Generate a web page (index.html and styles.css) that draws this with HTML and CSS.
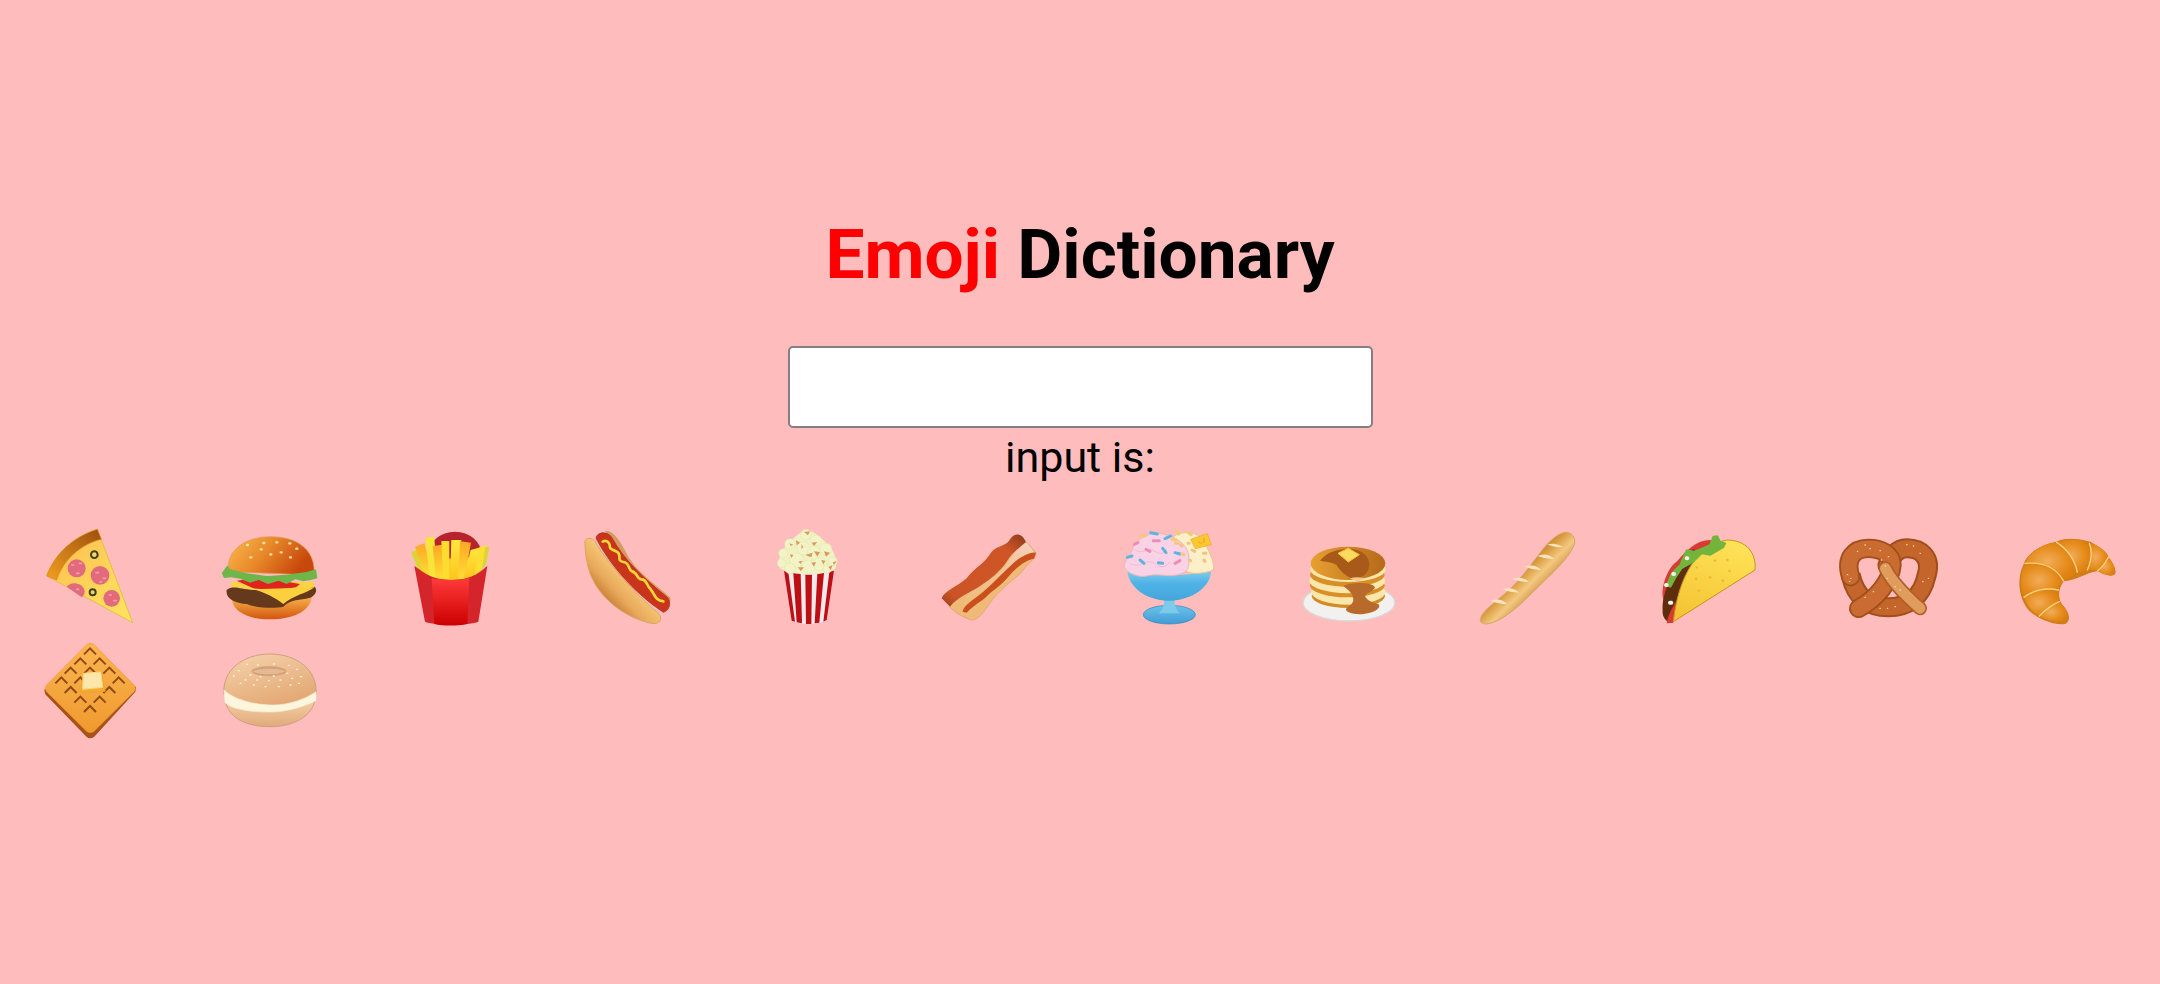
FILE: index.html
```html
<!DOCTYPE html>
<html lang="en">
<head>
<meta charset="utf-8">
<title>Emoji Dictionary</title>
<link rel="stylesheet" href="styles.css">
</head>
<body>
<main class="app">
  <h1 class="title"><span class="title-accent">Emoji</span> Dictionary</h1>
  <input class="search" type="text" aria-label="Search">
  <p class="output">input is:</p>
  <div class="emoji-grid">

    <!-- pizza -->
    <svg class="emoji" viewBox="66 54 288 288" role="img" aria-label="pizza">
      <defs>
        <linearGradient id="pz1" x1="0" y1="1" x2="1" y2="0"><stop offset="0" stop-color="#f2a020"/><stop offset="1" stop-color="#9c4e0d"/></linearGradient>
        <linearGradient id="pz2" x1="0" y1="0" x2="1" y2="1"><stop offset="0" stop-color="#ffb84e"/><stop offset="0.6" stop-color="#fed65a"/><stop offset="1" stop-color="#fee45f"/></linearGradient>
      </defs>
      <path d="M80 198C104 132 160 80 232 58L338 338Z" fill="url(#pz2)" stroke="#e0c14d" stroke-width="3" stroke-linejoin="round"/>
      <path d="M80 198C104 132 160 80 232 58L244 88C182 102 130 150 110 210Z" fill="url(#pz1)" stroke="#d9881e" stroke-width="2" stroke-linejoin="round"/>
      <circle cx="170" cy="175" r="27" fill="#e36a7d"/>
      <circle cx="240" cy="196" r="28" fill="#e36a7d"/>
      <path d="M140 230C150 215 185 215 193 240C196 250 190 258 185 262Z" fill="#e36a7d"/>
      <circle cx="275" cy="265" r="25" fill="#e36a7d"/>
      <path d="M155 165h6M178 160h6M170 190h7M228 188h7M250 205h7M240 216h5M268 255h6M282 272h6M170 238h6" stroke="#f2a0a8" stroke-width="5" stroke-linecap="round"/>
      <circle cx="223" cy="134" r="10" fill="#fbd56a" stroke="#3c4319" stroke-width="6"/>
      <circle cx="218" cy="247" r="9" fill="#fbd56a" stroke="#3c4319" stroke-width="6"/>
    </svg>

    <!-- burger -->
    <svg class="emoji" viewBox="606 54 288 288" role="img" aria-label="hamburger">
      <defs>
        <linearGradient id="bg1" x1="0" y1="0" x2="1" y2="0.35"><stop offset="0" stop-color="#fdbb4e"/><stop offset="0.5" stop-color="#e8892a"/><stop offset="1" stop-color="#c8470c"/></linearGradient>
        <linearGradient id="bg2" x1="0" y1="0" x2="0" y2="1"><stop offset="0" stop-color="#f8b14a"/><stop offset="1" stop-color="#d2550e"/></linearGradient>
      </defs>
      <path d="M636 270C640 305 685 328 750 328C820 328 868 305 876 262Z" fill="url(#bg2)"/>
      <path d="M625 185C618 118 680 80 752 80C830 80 888 118 882 195Z" fill="url(#bg1)" stroke="#d99a55" stroke-width="2"/>
      <path d="M630 215H882V240L640 240Z" fill="#f8d34a"/>
      <path d="M650 212L680 208 770 210 840 222 828 232 770 240 700 235Z" fill="#e0231c"/>
      <path d="M605 190L622 166 630 178 680 190 740 198 800 194 860 186 888 178 892 205 872 210 850 214 826 208 800 222 776 212 744 222 716 210 690 218 660 206 634 202 612 204Z" fill="#6fb64a"/>
      <path d="M620 240C640 225 660 238 700 240C770 245 840 245 884 230C894 240 886 258 868 264C840 272 815 265 790 290C770 295 710 295 680 282C650 280 615 268 620 240Z" fill="#64391c"/>
      <path d="M700 238L884 232C860 250 820 256 790 282C770 265 730 245 700 238Z" fill="#fbcf3d"/>
      <path d="M681 105h3M730 99h3M769 97h3M808 100h3M829 116h3M722 118h3M782 127h3M751 133h3M691 142h3M810 142h3" stroke="#fbe0a0" stroke-width="7" stroke-linecap="round"/>
    </svg>

    <!-- fries -->
    <svg class="emoji" viewBox="66 54 288 288" role="img" aria-label="french fries">
      <defs>
        <linearGradient id="fr1" x1="0" y1="0" x2="0" y2="1"><stop offset="0" stop-color="#ff3b3b"/><stop offset="1" stop-color="#cc0000"/></linearGradient>
        <linearGradient id="fr2" x1="0" y1="0" x2="0" y2="1"><stop offset="0" stop-color="#ffa726"/><stop offset="1" stop-color="#ffe234"/></linearGradient>
        <linearGradient id="fr3" x1="0" y1="0" x2="0" y2="1"><stop offset="0" stop-color="#ffe93b"/><stop offset="1" stop-color="#ffc21f"/></linearGradient>
      </defs>
      <ellipse cx="225" cy="135" rx="80" ry="70" fill="#b6232d"/>
      <path d="M120 150L310 140 300 200 150 212Z" fill="#ffc928"/>
      <path d="M94 126L112 120 130 190 118 190Z" fill="#d9d632"/>
      <path d="M105 110L133 100 165 210 130 195Z" fill="url(#fr2)"/>
      <path d="M136 85L162 78 175 215 150 210Z" fill="#f8e53a"/>
      <path d="M158 108L188 104 198 215 168 212Z" fill="url(#fr2)"/>
      <path d="M184 93H208V215H190Z" fill="#ffdc2e"/>
      <path d="M214 90H244L238 215H210Z" fill="url(#fr3)"/>
      <path d="M240 94L273 98 252 212 234 215Z" fill="url(#fr2)"/>
      <path d="M272 120L302 112 288 195 248 212Z" fill="url(#fr3)"/>
      <path d="M298 112L318 106 308 175 284 195Z" fill="#ffde33"/>
      <path d="M316 112L328 110 318 165 306 175Z" fill="#d8d636"/>
      <path d="M103 168C130 185 150 209 215 210C275 209 295 190 322 168L295 335C270 347 160 347 135 335Z" fill="#d4252c"/>
      <path d="M155 205C175 209 195 210 215 210C235 210 255 208 268 204L262 342C230 348 190 348 163 342Z" fill="url(#fr1)"/>
    </svg>

    <!-- hot dog -->
    <svg class="emoji" viewBox="606 54 288 288" role="img" aria-label="hot dog">
      <defs>
        <linearGradient id="hd1" gradientUnits="userSpaceOnUse" x1="660" y1="260" x2="735" y2="190"><stop offset="0" stop-color="#c67a33"/><stop offset="0.45" stop-color="#e8a95a"/><stop offset="1" stop-color="#f6c878"/></linearGradient>
      </defs>
      <path d="M675 62C700 60 720 90 745 140C775 190 830 225 870 262C876 275 868 280 860 280L700 100Z" fill="#d69a5f"/>
      <path d="M648 85C650 65 682 62 695 82C730 146 790 205 862 262C876 280 868 302 850 307C770 255 692 170 648 85Z" fill="#c8351a" stroke="#a62812" stroke-width="2"/>
      <path d="M668 95C682 88 690 100 690 112C690 122 708 118 716 130C722 144 712 152 730 156C750 158 742 176 756 184C774 188 768 206 784 208C802 208 798 226 812 238C826 256 826 272 850 274" fill="none" stroke="#fbd738" stroke-width="8" stroke-linecap="round" stroke-linejoin="round"/>
      <path d="M615 100C612 85 632 78 645 95C690 170 770 255 835 310C850 325 840 345 815 340C740 325 660 270 630 190C620 160 615 130 615 100Z" fill="url(#hd1)" stroke="#d9a565" stroke-width="3"/>
    </svg>

    <!-- popcorn -->
    <svg class="emoji" viewBox="66 54 288 288" role="img" aria-label="popcorn">
      <path d="M132 182C170 195 240 195 282 182L258 332C230 345 180 345 155 332Z" fill="#f2e9ec"/>
      <path d="M132 183L145 187 165 335 155 332ZM160 190L182 192 186 340 170 337ZM196 194H216L214 342 198 342ZM232 192L252 188 238 338 224 340ZM268 186L282 182 260 330 250 335Z" fill="#bd0f14"/>
      <path d="M115 160C118 120 150 90 190 62C215 55 240 80 265 105C285 125 295 160 285 178C250 198 160 198 120 175Z" fill="#f1f2c4"/>
      <g fill="#f2f3c6" stroke="#e3e3a6" stroke-width="1.5">
        <circle cx="125" cy="160" r="13"/><circle cx="130" cy="130" r="14"/><circle cx="150" cy="102" r="16"/>
        <circle cx="198" cy="74" r="16"/><circle cx="170" cy="150" r="22"/><circle cx="190" cy="115" r="20"/>
        <circle cx="228" cy="92" r="17"/><circle cx="222" cy="128" r="20"/><circle cx="205" cy="170" r="20"/>
        <circle cx="258" cy="118" r="18"/><circle cx="278" cy="155" r="14"/><circle cx="240" cy="162" r="20"/>
        <circle cx="150" cy="175" r="16"/><circle cx="262" cy="176" r="13"/>
      </g>
      <path d="M192 66L210 64 204 76ZM148 100L160 104 152 108ZM168 90L180 98 170 106ZM185 102L190 112 184 116ZM215 98L232 96 222 108ZM150 132L160 136 154 144ZM175 155L188 152 182 162ZM174 172L192 172 182 184ZM214 158L228 156 222 170ZM196 135L218 128 214 142ZM222 124L240 126 232 140ZM252 124L270 128 258 140ZM244 150L256 152 250 164ZM265 170L278 166 272 180ZM278 156L290 154 282 166Z" fill="#d99a5c"/>
    </svg>

    <!-- bacon -->
    <svg class="emoji" viewBox="606 54 288 288" role="img" aria-label="bacon">
      <defs>
        <linearGradient id="bc1" x1="0" y1="1" x2="1" y2="0"><stop offset="0" stop-color="#9c3e20"/><stop offset="0.15" stop-color="#cb5426"/><stop offset="0.78" stop-color="#cf5526"/><stop offset="1" stop-color="#8a3a1e"/></linearGradient>
        <linearGradient id="bc2" x1="0" y1="1" x2="1" y2="0"><stop offset="0" stop-color="#f0bb7a"/><stop offset="0.55" stop-color="#f2c394"/><stop offset="1" stop-color="#f6d2c2"/></linearGradient>
      </defs>
      <path d="M628 290C640 265 665 250 690 230L860 96L888 128C890 145 865 158 848 182C832 205 805 215 785 240C765 255 750 280 735 300C722 318 708 332 692 330C670 322 645 308 628 290Z" fill="#efb978" stroke="#d9a06a" stroke-width="2"/>
      <path d="M858 96C840 110 830 118 815 140C800 160 790 175 770 195C745 215 715 232 680 258L668 290C690 265 735 240 760 222C790 200 815 160 886 130Z" fill="url(#bc2)"/>
      <path d="M605 265C615 240 650 232 680 205C700 175 730 165 755 125C775 105 800 110 812 85C825 68 845 68 858 96C840 112 815 128 800 155C780 185 750 208 720 228C690 248 652 262 630 290Z" fill="url(#bc1)"/>
      <path d="M668 305C670 285 700 270 730 245C765 215 795 180 828 152C850 138 870 125 888 128L882 146C855 150 830 172 805 200C780 230 755 242 735 264C712 282 695 292 680 308Z" fill="#c9501c"/>
    </svg>

    <!-- ice cream -->
    <svg class="emoji" viewBox="66 54 288 288" role="img" aria-label="ice cream">
      <defs>
        <linearGradient id="ic1" x1="0" y1="0" x2="0" y2="1"><stop offset="0" stop-color="#7ecbec"/><stop offset="0.4" stop-color="#4fb3e6"/><stop offset="1" stop-color="#45a5db"/></linearGradient>
        <linearGradient id="ic2" x1="0" y1="0" x2="0" y2="1"><stop offset="0" stop-color="#6cc3ea"/><stop offset="1" stop-color="#3f9cd6"/></linearGradient>
      </defs>
      <ellipse cx="208" cy="314" rx="78" ry="28" fill="url(#ic2)" stroke="#3a82b5" stroke-width="2"/>
      <path d="M192 262H224C222 285 228 300 240 310H176C188 300 194 285 192 262Z" fill="#7ecbe9"/>
      <path d="M82 185Q200 205 333 185C330 240 260 272 208 272C150 272 90 240 82 185Z" fill="url(#ic1)"/>
      <path d="M220 80C250 58 300 65 315 100C330 130 345 160 340 180C310 192 280 192 262 186C240 150 225 110 220 80Z" fill="#fdf0c8" stroke="#e6c48e" stroke-width="3"/>
      <path d="M72 170C75 145 95 135 100 110C115 85 155 60 190 72C225 80 258 100 265 130C270 160 268 184 246 190C215 205 182 190 150 196C120 206 80 190 72 170Z" fill="#fad2e6" stroke="#ecb7b6" stroke-width="3"/>
      <path d="M105 118Q120 130 135 122T168 126T200 118M90 160Q110 172 130 160T170 164T210 156" fill="none" stroke="#f6b9cf" stroke-width="3"/>
      <path d="M272 88L322 71 334 104 286 116Z" fill="#fdc82f" stroke="#e9a71d" stroke-width="2"/>
      <path d="M295 95Q302 105 308 96M312 84V98" fill="none" stroke="#d98e16" stroke-width="2"/>
      <g fill="none" stroke-width="9" stroke-linecap="round">
        <path d="M152 68L172 72M195 86L212 78M188 115L198 128M225 128L240 132M82 142L96 138M120 150L132 160M175 158L188 160" stroke="#5fb2e2"/>
        <path d="M103 103L114 98M160 92L178 92M138 118L150 124M225 160L240 152" stroke="#ec8fb7"/>
        <path d="M122 78L136 78M232 62L236 72M216 88L228 90M264 68L274 74M246 132L252 134M226 100L236 100" stroke="#f4c978"/>
        <path d="M264 100L268 100M276 120L284 124M310 130L318 130M268 150L272 152M312 150L315 154M242 105L246 108" stroke="#f0c382"/>
      </g>
    </svg>

    <!-- pancakes -->
    <svg class="emoji" viewBox="606 54 288 288" role="img" aria-label="pancakes">
      <defs>
        <linearGradient id="pc1" x1="0" y1="0" x2="1" y2="0"><stop offset="0" stop-color="#e7a02f"/><stop offset="1" stop-color="#b56a1a"/></linearGradient>
      </defs>
      <ellipse cx="747" cy="278" rx="138" ry="55" fill="#f3f1f0" stroke="#dcd6d4" stroke-width="4"/>
      <ellipse cx="745" cy="258" rx="110" ry="36" fill="#d18a24"/>
      <ellipse cx="745" cy="246" rx="112" ry="38" fill="#fbe6ac"/>
      <ellipse cx="742" cy="226" rx="112" ry="36" fill="#d98f26"/>
      <ellipse cx="742" cy="212" rx="114" ry="38" fill="#fbe6ac"/>
      <ellipse cx="742" cy="194" rx="112" ry="36" fill="#d98f26"/>
      <ellipse cx="744" cy="178" rx="113" ry="38" fill="#fbe6ac"/>
      <ellipse cx="744" cy="160" rx="112" ry="50" fill="url(#pc1)"/>
      <path d="M660 152C680 128 700 120 745 116C775 116 805 130 808 160C808 185 795 200 770 207C745 205 725 190 710 165C695 155 675 155 660 152Z" fill="#a9591a"/>
      <path d="M730 228C750 215 820 215 825 232C820 245 800 248 795 258C800 270 815 278 835 282C845 290 830 308 790 312C760 315 735 305 738 297C745 288 758 285 760 270C760 250 745 240 730 228Z" fill="#b86a2c"/>
      <path d="M750 205Q770 198 795 205Q775 222 750 205Z" fill="#f0c890"/>
      <path d="M714 130L745 115 778 134 745 156Z" fill="#fddb5e" stroke="#f3c23b" stroke-width="3" stroke-linejoin="round"/>
    </svg>

    <!-- baguette -->
    <svg class="emoji" viewBox="66 54 288 288" role="img" aria-label="baguette">
      <defs>
        <linearGradient id="bq1" gradientUnits="userSpaceOnUse" x1="165" y1="165" x2="240" y2="240"><stop offset="0" stop-color="#b87620"/><stop offset="0.35" stop-color="#d99a3e"/><stop offset="0.68" stop-color="#f3c980"/><stop offset="1" stop-color="#d29a4c"/></linearGradient>
      </defs>
      <path d="M62 325C70 295 130 265 180 205C230 150 260 85 310 68C335 62 350 85 342 105C325 150 265 200 215 250C170 295 125 335 80 342C65 342 58 335 62 325Z" fill="url(#bq1)" stroke="#d6a566" stroke-width="3"/>
      <g fill="#fbe3bf">
        <path d="M262 104Q285 95 310 112Q285 112 262 104Z"/>
        <path d="M232 138Q260 125 284 148Q258 148 232 138Z"/>
        <path d="M194 170Q222 160 244 180Q218 180 194 170Z"/>
        <path d="M157 207Q185 196 206 216Q180 216 157 207Z"/>
        <path d="M128 238Q155 228 178 248Q150 248 128 238Z"/>
        <path d="M92 272Q120 262 142 282Q115 282 92 272Z"/>
      </g>
    </svg>

    <!-- taco -->
    <svg class="emoji" viewBox="606 54 288 288" role="img" aria-label="taco">
      <defs>
        <linearGradient id="tc1" x1="0.7" y1="0" x2="0.3" y2="1"><stop offset="0" stop-color="#ffe258"/><stop offset="1" stop-color="#f4c432"/></linearGradient>
      </defs>
      <path d="M610 268C600 230 625 170 650 155C680 120 710 90 750 90L790 110L650 330L610 300Z" fill="#d93a34"/>
      <path d="M608 300C605 250 640 170 700 118L725 130C680 190 655 270 640 336C625 342 605 325 608 300Z" fill="#5e2d0b"/>
      <path d="M620 340C625 310 640 290 648 272L640 338Z" fill="#d93a34"/>
      <path d="M640 335C650 240 690 110 800 90C860 90 890 130 885 180Z" fill="url(#tc1)" stroke="#c69320" stroke-width="3" stroke-linejoin="round"/>
      <path d="M620 228L635 190 660 165 680 120 700 125 720 118 750 105 760 80 772 78 780 95 796 100 790 112 750 135 725 130 700 155 665 175 645 205 632 230Z" fill="#74b43d" stroke="#74b43d" stroke-width="5" stroke-linejoin="round"/>
      <path d="M680 145h2M640 192h2M630 278h4M618 225h2" stroke="#f3f5ea" stroke-width="12" stroke-linecap="round"/>
      <path d="M802 150h1M750 202h1M788 212h1M764 152h1M708 207h1M716 242h1M808 183h1M710 172h1" stroke="#f2b42a" stroke-width="7" stroke-linecap="round"/>
    </svg>

    <!-- pretzel -->
    <svg class="emoji" viewBox="126 54 288 288" role="img" aria-label="pretzel">
      <path d="M380 195C396 142 362 115 320 115C290 115 275 140 262 165" fill="none" stroke="#a04e1b" stroke-width="60" stroke-linecap="round"/>
      <path d="M152 195C168 268 212 292 265 292C318 292 365 268 380 195" fill="none" stroke="#a04e1b" stroke-width="60"/>
      <path d="M380 195C396 142 362 115 320 115C290 115 275 140 262 165" fill="none" stroke="#c4662c" stroke-width="48" stroke-linecap="round"/>
      <path d="M152 195C168 268 212 292 265 292C318 292 365 268 380 195" fill="none" stroke="#c4662c" stroke-width="48"/>
      <path d="M176 295C230 265 272 215 276 165C276 130 240 115 205 115C162 115 134 145 152 200" fill="none" stroke="#a04e1b" stroke-width="58" stroke-linecap="round"/>
      <path d="M176 295C230 265 272 215 276 165C276 130 240 115 205 115C162 115 134 145 152 200" fill="none" stroke="#ca6c32" stroke-width="47" stroke-linecap="round"/>
      <path d="M256 175C275 215 320 260 360 295" fill="none" stroke="#b05e26" stroke-width="42" stroke-linecap="round"/>
      <path d="M256 175C275 215 320 260 360 295" fill="none" stroke="#e09c5c" stroke-width="32" stroke-linecap="round"/>
      <path d="M172 124h1M210 116h1M195 105h1M240 122h1M265 140h1M244 150h1M142 194h1M152 205h1M148 214h1M320 104h1M340 108h1M360 130h1M385 205h1M368 215h1M240 295h1M262 295h1M285 290h1M220 245h1M195 262h1M262 205h1M285 230h1M300 240h1M255 168h1" stroke="#ffd9a0" stroke-width="4" stroke-linecap="round"/>
    </svg>

    <!-- croissant -->
    <svg class="emoji" viewBox="666 54 288 288" role="img" aria-label="croissant">
      <defs>
        <radialGradient id="cr1" cx="0.42" cy="0.5" r="0.62"><stop offset="0" stop-color="#f2ad5a"/><stop offset="0.65" stop-color="#e58b1a"/><stop offset="1" stop-color="#d97d0e"/></radialGradient>
      </defs>
      <path d="M945 185C940 160 915 120 870 97C830 85 790 85 770 97C720 105 680 135 672 165C655 200 655 250 680 290C700 320 760 345 795 340C812 330 805 310 790 290C770 270 770 240 790 212C830 210 870 180 895 182C915 195 945 202 945 185Z" fill="#d07d12" stroke="#cf7d1c" stroke-width="4"/>
      <g fill="url(#cr1)" stroke-linejoin="round">
        <path d="M925 142C945 165 950 185 940 195C925 198 905 190 893 182C905 175 918 160 925 142Z"/>
        <path d="M868 100C900 105 925 130 925 142C918 160 905 175 893 182C880 178 870 182 858 183C875 150 878 125 868 100Z"/>
        <path d="M770 97C800 85 850 85 868 100C878 125 875 150 858 183C850 187 840 190 832 187C825 150 800 115 770 97Z"/>
        <path d="M770 97C800 115 825 150 832 187C820 198 805 207 790 212C770 175 730 155 675 160C690 125 730 100 770 97Z"/>
        <path d="M675 160C730 155 770 175 790 212C778 225 772 232 775 240C740 232 700 240 672 262C660 225 660 190 675 160Z"/>
        <path d="M672 262C700 240 740 232 775 240C775 255 780 265 778 275C755 285 735 300 718 318C695 305 680 285 672 262Z"/>
        <path d="M718 318C735 300 755 285 778 275C795 290 808 315 800 330C790 342 745 335 718 318Z"/>
      </g>
      <path d="M675 160C730 155 770 175 790 212M770 97C800 115 825 150 832 187M868 100C878 125 875 150 862 180M925 142C915 160 905 175 893 182M672 262C700 240 740 232 775 240M718 318C735 300 755 285 778 275" fill="none" stroke="#fcd285" stroke-width="4" stroke-linecap="round"/>
    </svg>

    <!-- waffle -->
    <svg class="emoji" viewBox="66 396 288 288" role="img" aria-label="waffle">
      <defs>
        <linearGradient id="wf1" x1="0" y1="0" x2="0" y2="1"><stop offset="0" stop-color="#fbb551"/><stop offset="1" stop-color="#ef9a2e"/></linearGradient>
      </defs>
      <path d="M75 540L78 552 200 678Q210 688 222 678L344 545 346 532Z" fill="#a8521a" stroke="#a8521a" stroke-width="4" stroke-linejoin="round"/>
      <path d="M200 404Q210 396 222 404L342 525Q350 535 342 545L222 664Q210 672 200 664L80 545Q72 535 80 525Z" fill="url(#wf1)" stroke="#f09a2a" stroke-width="2"/>
      <path d="M192 433l18-18 18 18M163 463l18-18 18 18M221 463l18-18 18 18M134 491l18-18 18 18M192 491l18-18 18 18M250 491l18-18 18 18M106 520l18-18 18 18M163 520l18-18 18 18M278 520l18-18 18 18M134 549l18-18 18 18M250 549l18-18 18 18M163 578l18-18 18 18M221 578l18-18 18 18M192 606l18-18 18 18" fill="none" stroke="#8f4a14" stroke-width="6"/>
      <path d="M190 492L244 486 256 544 182 548Z" fill="#f4a92f" stroke="#f0a22a" stroke-width="2" stroke-linejoin="round"/>
      <path d="M190 490L242 486 248 532 188 538Z" fill="#fde6ac" stroke="#fcd97f" stroke-width="3" stroke-linejoin="round"/>
    </svg>

    <!-- bagel -->
    <svg class="emoji" viewBox="606 396 288 288" role="img" aria-label="bagel">
      <defs>
        <linearGradient id="bl1" x1="0.2" y1="0" x2="0.7" y2="1"><stop offset="0" stop-color="#f5d0a8"/><stop offset="1" stop-color="#e2a570"/></linearGradient>
        <linearGradient id="bl2" x1="0" y1="0" x2="0" y2="1"><stop offset="0" stop-color="#f6cfa4"/><stop offset="1" stop-color="#e0aa7c"/></linearGradient>
      </defs>
      <path d="M615 570C625 625 680 650 750 650C820 650 875 620 885 570Z" fill="url(#bl2)" stroke="#cf9f80" stroke-width="3"/>
      <path d="M612 555C605 480 670 432 750 432C830 432 895 480 888 555C850 580 800 592 750 592C700 592 650 580 612 555Z" fill="url(#bl1)" stroke="#cf9f80" stroke-width="3"/>
      <path d="M612 540C640 568 700 585 760 585C810 585 860 565 888 545L888 572C850 590 800 606 750 606C700 606 640 600 615 578Z" fill="#fdf6dd" stroke="#eef0d6" stroke-width="2"/>
      <ellipse cx="747" cy="484" rx="52" ry="15" fill="#d2a07a"/>
      <path d="M698 484C720 474 775 474 797 484C775 496 720 496 698 484Z" fill="#e5ba92"/>
      <path d="M680 463h3M712 465h3M760 462h3M805 466h3M830 478h3M655 482h3M640 498h3M690 495h3M675 510h3M710 510h3M745 512h3M780 510h3M815 505h3M842 500h3M660 520h3M700 525h3M735 530h3M775 530h3M810 525h3M835 520h3M720 500h3M760 498h3M800 490h3" stroke="#fff1d6" stroke-width="4" stroke-linecap="round"/>
    </svg>

  </div>
</main>
</body>
</html>
```

FILE: styles.css
```css
html, body {
  margin: 0;
  padding: 0;
}

body {
  min-height: 984px;
  background: #ffbcbc;
  color: #000;
  font-family: Roboto, "Liberation Sans", sans-serif;
}

.app {
  display: flex;
  flex-direction: column;
  align-items: center;
  padding-top: 217px;
}

.title {
  margin: 0 0 54px;
  font-size: 69.33px;
  font-weight: 700;
  line-height: 75px;
  text-align: center;
}

.title-accent {
  color: #ff0000;
}

.search {
  box-sizing: border-box;
  display: block;
  width: 585px;
  height: 82px;
  padding: 0 8px;
  border: 2px solid #857f84;
  border-radius: 5px;
  background: #fff;
  font: inherit;
}

.output {
  margin: 4px 0 0;
  font-size: 43px;
  line-height: 50px;
  text-align: center;
}

.emoji-grid {
  display: grid;
  grid-template-columns: repeat(12, 180px);
  grid-auto-rows: 96px;
  row-gap: 18px;
  justify-items: center;
  width: 2160px;
  margin-top: 46px;
}

.emoji {
  display: block;
  width: 96px;
  height: 96px;
  overflow: visible;
}
```
